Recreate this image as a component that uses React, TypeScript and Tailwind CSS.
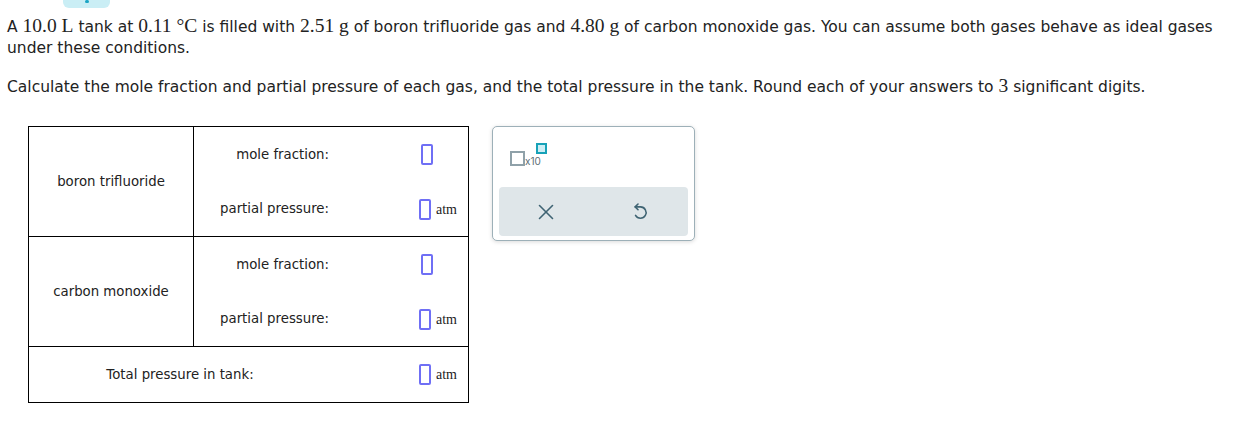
import { X } from "lucide-react";

const Num = ({ children }: { children: React.ReactNode }) => (
  <span className="font-['Liberation_Serif',serif] text-[19.5px] leading-[20px] text-[#222]">{children}</span>
);

const AnswerBox = () => (
  <span className="inline-block w-[12px] h-[21px] border-2 border-[#6f6ff5] rounded-[2px] bg-white" />
);

const Field = ({ unit }: { unit?: boolean }) => (
  <div className="flex items-center gap-[5px]">
    <AnswerBox />
    {unit && <span className="font-['Liberation_Serif',serif] text-[14px] text-[#222]">atm</span>}
  </div>
);

const SubRow = ({ label, unit }: { label: string; unit?: boolean }) => (
  <div className={`flex items-center ${unit ? "h-[54px]" : "h-[55px]"}`}>
    <div className="w-[136px] text-right pr-[1px]">{label}</div>
    <div className={unit ? "ml-[89px]" : "ml-[91px]"}>
      <Field unit={unit} />
    </div>
  </div>
);

const GasRow = ({ name }: { name: string }) => (
  <div className="flex border-b border-black">
    <div className="w-[165px] border-r border-black flex items-center justify-center">{name}</div>
    <div className="flex-1 flex flex-col">
      <SubRow label="mole fraction:" />
      <SubRow label="partial pressure:" unit />
    </div>
  </div>
);

const UndoIcon = () => (
  <svg width="17" height="17" viewBox="0 0 24 24" fill="none" stroke="#3f6473" strokeWidth="2.2" strokeLinecap="round" strokeLinejoin="round">
    <path d="M8.5 1.5 L4.5 5.5 L8.5 9.5" />
    <path d="M4.5 5.5 H12 A8 8 0 1 1 5 17.5" />
  </svg>
);

const App = () => {
  return (
    <div className="relative w-[1260px] h-[437px] bg-white font-['DejaVu_Sans',Verdana,sans-serif] text-[#222]">
      <div className="absolute left-[63px] top-[-10px] w-[47px] h-[18px] rounded-[6px] bg-[#caeef5] flex justify-center items-end pb-[5px]">
        <span className="w-[4px] h-[3px] rounded-full bg-[#1aa4c4]" />
      </div>

      <div className="pl-[7px] pr-[30px] pt-[16px] text-[15.5px] leading-[21px]">
        <p>
          A <Num>10.0 L</Num> tank at <Num>0.11 °C</Num> is filled with <Num>2.51 g</Num> of boron trifluoride gas and{" "}
          <Num>4.80 g</Num> of carbon monoxide gas. You can assume both gases behave as ideal gases under these
          conditions.
        </p>
        <p className="mt-[17px]">
          Calculate the mole fraction and partial pressure of each gas, and the total pressure in the tank. Round each of
          your answers to <Num>3</Num> significant digits.
        </p>
      </div>

      <div className="flex items-start mt-[28px] ml-[28px]">
        <div className="w-[441px] border border-black border-b-0 text-[13.3px]">
          <GasRow name="boron trifluoride" />
          <GasRow name="carbon monoxide" />
          <div className="flex items-center h-[56px] border-b border-black">
            <div className="w-[301px] text-center pl-[1px]">Total pressure in tank:</div>
            <div className="ml-[89px]">
              <Field unit />
            </div>
          </div>
        </div>

        <div className="ml-[23px] w-[203px] h-[115px] border border-[#9db0b8] rounded-[5px] shadow-[0_1px_4px_rgba(0,0,0,0.15)] bg-white px-[6px] pt-[16px]">
          <div className="relative h-[24px]">
            <span className="absolute left-[11px] top-[8px] w-[15px] h-[15px] border-2 border-[#8fa1a9]" />
            <span className="absolute left-[26px] top-[13px] text-[10px] leading-[10px] text-[#5b6e76] font-['Inter',sans-serif]">x10</span>
            <span className="absolute left-[37px] top-[0px] w-[11px] h-[11px] border-2 border-[#17a2b8] bg-[#cdeef5]" />
          </div>
          <div className="mt-[20px] h-[49px] rounded-[4px] bg-[#dfe6e9] grid grid-cols-2 items-center justify-items-center">
            <X size={26} strokeWidth={1.5} className="text-[#3f6473]" />
            <UndoIcon />
          </div>
        </div>
      </div>
    </div>
  );
};

export default App;
